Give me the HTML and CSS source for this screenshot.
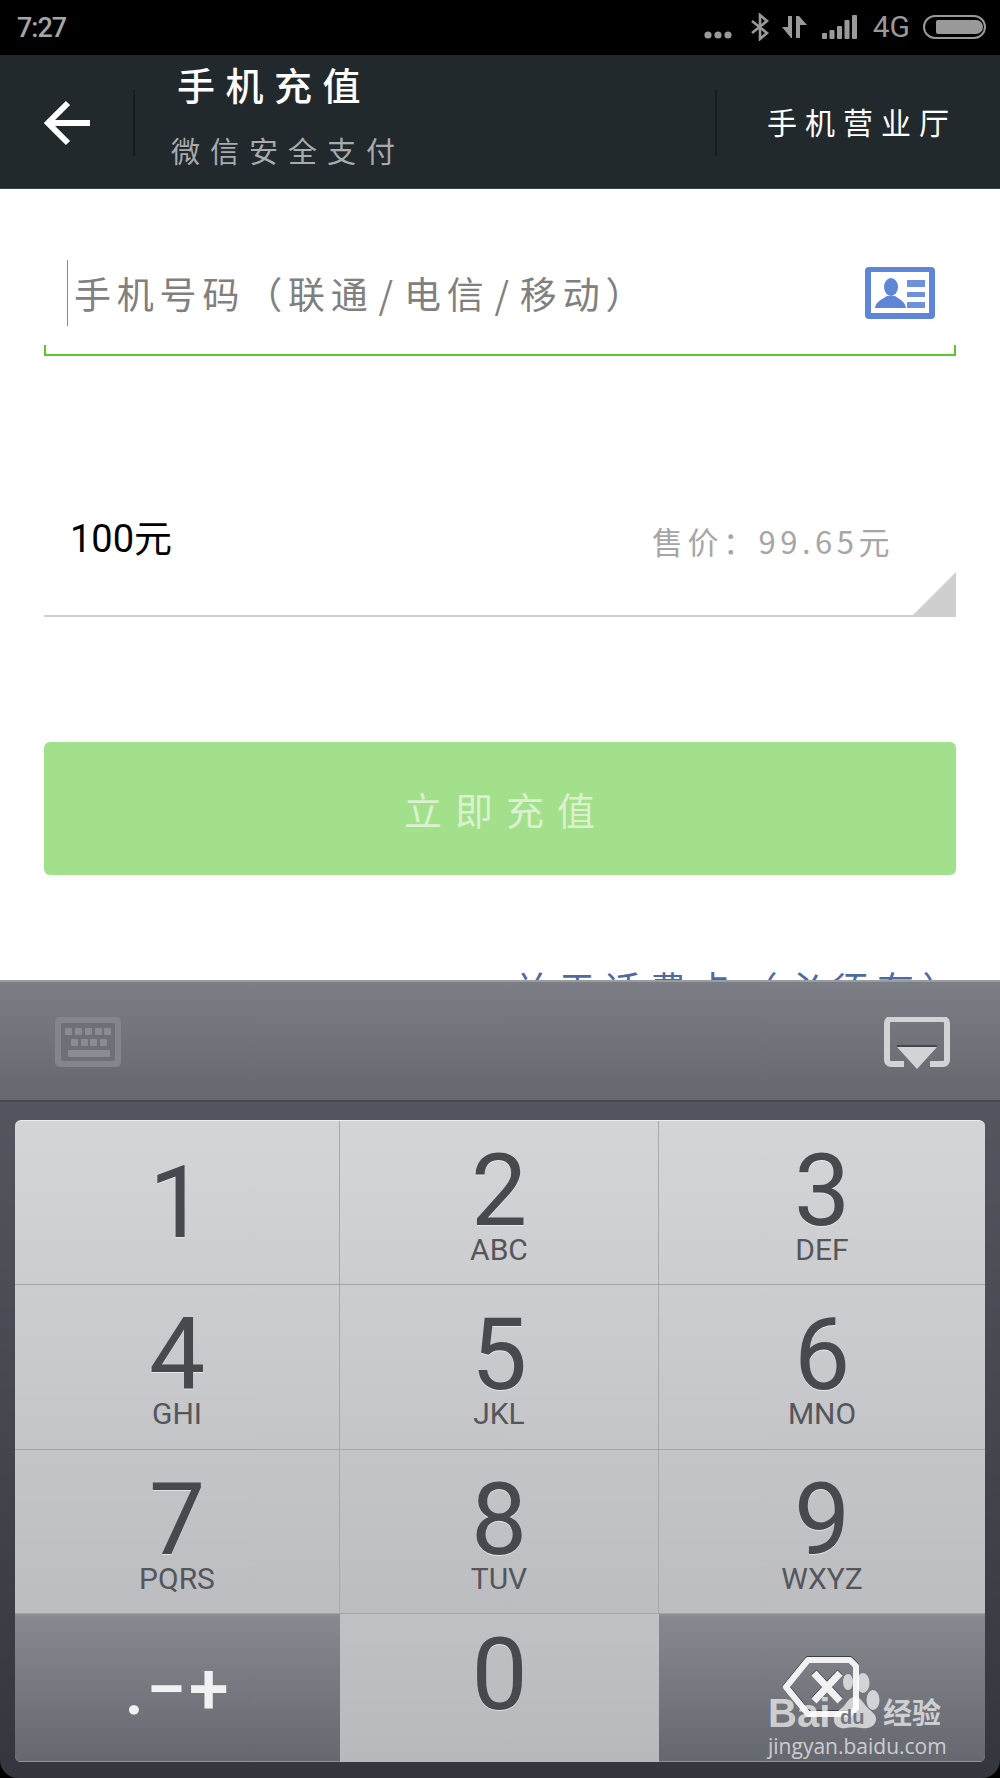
FILE: index.html
```html
<!DOCTYPE html>
<html lang="zh-CN">
<head>
  <meta charset="UTF-8" />
  <meta name="viewport" content="width=device-width, initial-scale=1" />
  <title>手机充值</title>
  <link rel="stylesheet" href="styles.css">
</head>
<body>

<div class="status-bar">
  <span class="clock">7:27</span>
  <div class="status-icons">
    <svg class="st-dots" width="28" height="8" viewBox="0 0 28 8"><circle cx="4" cy="4" r="3.6"/><circle cx="14" cy="4" r="3.6"/><circle cx="24" cy="4" r="3.6"/></svg>
    <svg class="st-bt" width="18" height="28" viewBox="0 0 18 28"><path d="M1 8l15 12-7 6V2l7 6L1 20" fill="none" stroke="#999" stroke-width="2.6"/></svg>
    <svg class="st-arrows" width="26" height="24" viewBox="0 0 26 24"><path d="M6 1h4v22H9L0 12h6z"/><path d="M14 1h3l8 9h-7v13h-4z"/></svg>
    <svg class="st-signal" width="35" height="24" viewBox="0 0 35 24"><rect x="0" y="18" width="5" height="6" rx="1"/><rect x="7.500" y="15" width="5" height="9" rx="1"/><rect x="15" y="11" width="5" height="13" rx="1"/><rect x="22.500" y="5" width="5" height="19" rx="1"/><rect x="30" y="0" width="5" height="24" rx="1"/></svg>
    <span class="net">4G</span>
    <div class="battery"><div class="battery-fill"></div></div>
  </div>
</div>

<header class="topbar">
  <a class="back">
    <svg width="46" height="46" viewBox="0 0 46 46"><path d="M24 3L4 23l20 20M5 23h41" fill="none" stroke="#fff" stroke-width="6"/></svg>
  </a>
  <div class="title-box">
    <div class="title">手机充值</div>
    <div class="subtitle">微信安全支付</div>
  </div>
  <a class="hall">手机营业厅</a>
</header>

<main class="content">
  <div class="phone-field">
    <span class="cursor"></span>
    <span class="phone-hint">手机号码（联通<span class="slash">/</span>电信<span class="slash">/</span>移动）</span>
    <svg class="contact-icon" width="70" height="52" viewBox="0 0 70 52">
      <rect width="70" height="52" rx="4" fill="#5f86d6"/>
      <rect x="6" y="5" width="58" height="41" fill="#fff"/>
      <ellipse cx="26" cy="20" rx="7" ry="9" fill="#5f86d6"/>
      <path d="M10 41c1-7 8-9 12-12h8c4 3 10 5 11 12z" fill="#5f86d6"/>
      <rect x="42" y="13" width="18" height="7" fill="#6d91da"/>
      <rect x="42" y="25" width="18" height="5" fill="#6d91da"/>
      <rect x="42" y="35" width="18" height="6" fill="#6d91da"/>
    </svg>
  </div>

  <div class="amount-field">
    <span class="amount">100元</span>
    <span class="price">售价：99.65元</span>
    <span class="corner"></span>
  </div>

  <button type="button" class="pay-btn">立即充值</button>

  <div class="card-link">关于话费卡（必须有）</div>
</main>

<section class="keyboard">
  <div class="kb-tools">
    <svg width="66" height="50" viewBox="0 0 66 50">
      <rect width="66" height="50" rx="5" fill="#83868d"/>
      <rect x="6" y="6" width="54" height="38" rx="2" fill="#6d7077"/>
      <g fill="#898c93">
        <rect x="10" y="11" width="7" height="7" rx="1"/><rect x="20" y="11" width="7" height="7" rx="1"/><rect x="30" y="11" width="7" height="7" rx="1"/><rect x="40" y="11" width="7" height="7" rx="1"/><rect x="49" y="11" width="7" height="7" rx="1"/>
        <rect x="16" y="22" width="7" height="7" rx="1"/><rect x="26" y="22" width="7" height="7" rx="1"/><rect x="35" y="22" width="7" height="7" rx="1"/><rect x="45" y="22" width="7" height="7" rx="1"/>
        <rect x="13" y="33" width="42" height="7" rx="1"/>
      </g>
    </svg>
    <svg width="68" height="54" viewBox="0 0 68 54">
      <path d="M21 47H8a4 4 0 0 1-4-4V6a4 4 0 0 1 4-4h52a4 4 0 0 1 4 4v37a4 4 0 0 1-4 4H47" fill="none" stroke="#d2d3d5" stroke-width="6"/>
      <rect x="14" y="28" width="40" height="2" fill="#45484e"/>
      <path d="M14 30h40L34 52z" fill="#d2d3d5"/>
    </svg>
  </div>

  <div class="keypad">
    <div class="key key-one"><span class="num">1</span></div>
    <div class="key"><span class="num">2</span><span class="abc">ABC</span></div>
    <div class="key"><span class="num">3</span><span class="abc">DEF</span></div>
    <div class="key"><span class="num">4</span><span class="abc">GHI</span></div>
    <div class="key"><span class="num">5</span><span class="abc">JKL</span></div>
    <div class="key"><span class="num">6</span><span class="abc">MNO</span></div>
    <div class="key"><span class="num">7</span><span class="abc">PQRS</span></div>
    <div class="key"><span class="num">8</span><span class="abc">TUV</span></div>
    <div class="key"><span class="num">9</span><span class="abc">WXYZ</span></div>
    <div class="key key-fn"><span class="symbols">.−+</span></div>
    <div class="key key-zero"><span class="num">0</span></div>
    <div class="key key-fn key-back">
      <svg width="80" height="62" viewBox="0 0 80 62">
        <path d="M26 4h42l6 6v42l-6 6H26L4 31z" fill="none" stroke="#f1f1f2" stroke-width="6" stroke-linejoin="round"/>
        <path d="M32 17l26 28M58 17L32 45" fill="none" stroke="#f1f1f2" stroke-width="7"/>
      </svg>
    </div>
  </div>
</section>

<!-- marca de agua -->
<div class="watermark">
  <div class="wm-top">
    <span class="wm-bai">Bai</span>
    <svg class="wm-paw" width="48" height="58" viewBox="0 0 48 58">
      <ellipse cx="15" cy="9" rx="5" ry="8"/><ellipse cx="30" cy="10" rx="6.500" ry="10"/><ellipse cx="40" cy="27" rx="6.500" ry="10"/>
      <path d="M22 24c-6 0-8 6-12 10-5 4-10 8-9 14 1 6 7 8 12 7 5-1 9-1 15 0 7 1 14-1 15-8 1-6-6-9-10-14-3-4-6-9-11-9z"/>
    </svg>
    <span class="wm-du">du</span>
    <span class="wm-jy">经验</span>
  </div>
  <div class="wm-url">jingyan.baidu.com</div>
</div>

</body>
</html>
```

FILE: styles.css
```css
* {
  box-sizing: border-box;
}
html, body {
  margin: 0;
  padding: 0;
}
body {
  position: relative;
  width: 1000px;
  height: 1778px;
  overflow: hidden;
  background: #000;
  font-family: 'Noto Sans CJK SC', 'Noto Sans', sans-serif;
}

/* Barra de estado */
.status-bar {
  height: 55px;
  background: #000;
  color: #a5a5a5;
  display: flex;
  justify-content: space-between;
  align-items: center;
  padding: 0 14px 0 17px;
}
.clock {
  font-family: 'Roboto', sans-serif;
  font-size: 27px;
  font-weight: 500;
  letter-spacing: -1px;
}
.status-icons {
  display: flex;
  align-items: center;
  height: 26px;
  margin-top: -1px;
}
.status-icons svg {
  fill: #999;
  flex: none;
}
.st-dots {
  margin: 16px 19px 0 0;
}
.st-bt {
  margin: 0 13px 0 0;
}
.st-arrows {
  margin-right: 14px;
}
.st-signal {
  margin-right: 16px;
}
.net {
  font-family: 'Roboto', sans-serif;
  font-size: 30px;
  color: #999;
  margin-right: 13px;
  line-height: 26px;
}
.battery {
  width: 63px;
  height: 24px;
  border: 2px solid #999;
  border-radius: 12px;
  padding: 3px;
}
.battery-fill {
  width: 47px;
  height: 14px;
  margin-left: 8px;
  background: #999;
  border-radius: 2px 7px 7px 2px;
}

/* Cabecera */
.topbar {
  height: 134px;
  background: #22292d;
  border-bottom: 1px solid #3b4347;
  display: flex;
  align-items: center;
  color: #fff;
}
.back {
  width: 135px;
  height: 66px;
  margin-top: 2px;
  padding: 10px 0 0 44px;
  border-right: 2px solid #171c1f;
}
.back svg {
  display: block;
}
.title-box {
  width: 580px;
  height: 134px;
  padding: 4px 0 0 36px;
}
.title {
  font-size: 38px;
  line-height: 50px;
  font-weight: 500;
  letter-spacing: 10.500px;
  padding-left: 6px;
}
.subtitle {
  font-size: 29px;
  line-height: 40px;
  margin-top: 21px;
  letter-spacing: 10px;
  color: #a8abac;
}
.hall {
  flex: 1;
  height: 66px;
  margin-top: 2px;
  border-left: 2px solid #171c1f;
  padding-left: 50px;
  font-size: 30px;
  line-height: 62px;
  letter-spacing: 8px;
  white-space: nowrap;
}

/* Contenido */
.content {
  height: 791px;
  overflow: hidden;
  background: #fff;
  padding: 0 44px;
}
.phone-field {
  height: 167px;
  position: relative;
  display: flex;
  align-items: flex-start;
  border-bottom: 2px solid #58c92e;
}
.phone-field::before,
.phone-field::after {
  content: "";
  position: absolute;
  bottom: 0;
  width: 2px;
  height: 9px;
  background: #58c92e;
}
.phone-field::before {
  left: 0;
}
.phone-field::after {
  right: 0;
}
.cursor {
  width: 1px;
  height: 66px;
  margin: 71px 0 0 23px;
  background: #8a8a8a;
}
.phone-hint {
  margin: 82px 0 0 6px;
  font-size: 37px;
  line-height: 44px;
  color: #808080;
  letter-spacing: 5.800px;
  white-space: nowrap;
  flex: 1;
}
.slash {
  margin: 0 5px;
}
.contact-icon {
  margin: 78px 21px 0 0;
  flex: none;
}
.amount-field {
  height: 261px;
  position: relative;
  display: flex;
  justify-content: space-between;
  align-items: flex-start;
  padding: 160px 62px 0 26px;
  border-bottom: 2px solid #cfcfcf;
}
.amount {
  font-family: 'Roboto', 'Noto Sans CJK SC', sans-serif;
  font-size: 38px;
  line-height: 46px;
  color: #000;
}
.price {
  font-size: 31px;
  line-height: 46px;
  margin-top: 2px;
  color: #a6a6a6;
  letter-spacing: 4.500px;
  white-space: nowrap;
}
.corner {
  position: absolute;
  right: 0;
  bottom: 0;
  width: 43px;
  height: 43px;
  background: #cfcfcf;
  clip-path: polygon(100% 0, 100% 100%, 0 100%);
}
.pay-btn {
  display: block;
  width: 100%;
  height: 133px;
  margin-top: 125px;
  padding-left: 18px;
  background: #a3e08b;
  border: none;
  border-radius: 6px;
  color: #dbf1d0;
  font-family: inherit;
  font-size: 38px;
  letter-spacing: 13px;
}
.card-link {
  margin: 91px -12px 0 0;
  text-align: right;
  font-size: 37px;
  line-height: 44px;
  color: #4f6a9f;
  letter-spacing: 8.500px;
  white-space: nowrap;
}

/* Teclado */
.keyboard {
  height: 798px;
  background: linear-gradient(#595c64 0, #33363c 100%);
  border-radius: 0 0 18px 18px;
  border-top: 2px solid #9a9ca1;
}
.kb-tools {
  height: 120px;
  background: linear-gradient(#7b7e85, #65686f);
  border-bottom: 2px solid #44474e;
  display: flex;
  justify-content: space-between;
  align-items: flex-start;
  padding: 35px 49px 0 55px;
}
.kb-tools svg {
  display: block;
}
.keypad {
  margin: 18px 15px 0;
  width: 970px;
  height: 642px;
  display: grid;
  grid-template-columns: 325px 319px 326px;
  grid-template-rows: 164px 165px 164px 1fr;
  border-radius: 6px;
  overflow: hidden;
  background: linear-gradient(#d4d5d7 0, #bcbdc1 77%);
  border-top: 1px solid #eeeeef;
}
.key {
  display: flex;
  flex-direction: column;
  align-items: center;
  padding-top: 23px;
  border-bottom: 1px solid #a3a4a9;
  border-right: 1px solid #a8a9ad;
  color: #48494f;
  font-family: 'Roboto', sans-serif;
}
.key:nth-child(3n) {
  border-right: none;
}
.key-one {
  padding-top: 35px;
}
.num {
  font-size: 100px;
  font-weight: 400;
  line-height: 94px;
  text-shadow: 0 1px 0 rgba(255,255,255,0.5);
}
.abc {
  font-size: 30px;
  line-height: 24px;
  color: #55565b;
}
.key-zero {
  background: linear-gradient(#c0c1c4, #b8b9bc);
  border: none;
  padding-top: 14px;
}
.key-fn {
  background: linear-gradient(#868990, #65686e);
  border: none;
  border-top: 2px solid #8c8e94;
  border-bottom: 1px solid #8f9399;
  color: #f1f1f2;
  justify-content: center;
  padding-top: 0;
}
.key-back {
  justify-content: flex-start;
  padding-top: 40px;
}
.key-back svg {
  filter: drop-shadow(0 -1px 0 #3b3d43);
}
.symbols {
  font-size: 72px;
  line-height: 66px;
  font-weight: 500;
  letter-spacing: 2px;
  margin-top: 2px;
}

/* Marca de agua, encima del teclado */
.watermark {
  position: absolute;
  left: 768px;
  top: 1693px;
  width: 180px;
  color: rgba(255,255,255,0.68);
}
.wm-top {
  height: 40px;
  position: relative;
}
.wm-bai {
  font-family: 'Liberation Sans', sans-serif;
  font-weight: 700;
  font-size: 40px;
  line-height: 40px;
}
.wm-paw {
  position: absolute;
  left: 65px;
  top: -20px;
  fill: rgba(255,255,255,0.68);
}
.wm-du {
  position: absolute;
  left: 72px;
  top: 14px;
  font-family: 'Liberation Sans', sans-serif;
  font-size: 20px;
  line-height: 20px;
  font-weight: 700;
  color: #74777d;
}
.wm-jy {
  position: absolute;
  left: 115px;
  top: 0;
  font-size: 29px;
  line-height: 36px;
  font-weight: 700;
  white-space: nowrap;
}
.wm-url {
  font-family: 'Open Sans', sans-serif;
  font-size: 21px;
  line-height: 26px;
  white-space: nowrap;
}
```
